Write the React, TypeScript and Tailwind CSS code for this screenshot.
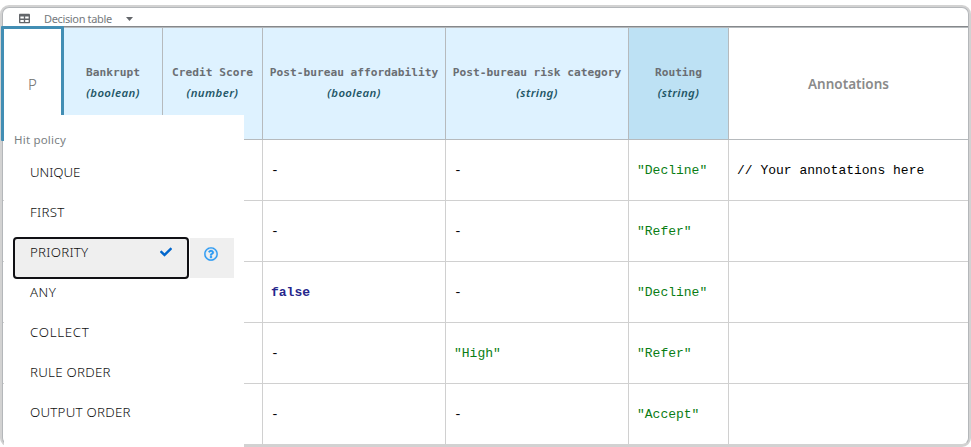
import React from "react";

type Column = { name: string; type: string; width: string; bg: string };

const columns: Column[] = [
  { name: "Bankrupt", type: "(boolean)", width: "w-[99px]", bg: "bg-[#def2ff]" },
  { name: "Credit Score", type: "(number)", width: "w-[100px]", bg: "bg-[#def2ff]" },
  { name: "Post-bureau affordability", type: "(boolean)", width: "w-[183px]", bg: "bg-[#def2ff]" },
  { name: "Post-bureau risk category", type: "(string)", width: "w-[183px]", bg: "bg-[#def2ff]" },
  { name: "Routing", type: "(string)", width: "w-[100px]", bg: "bg-[#bde1f4]" },
];

const rows: string[][] = [
  ["", "", "-", "-", '"Decline"', "// Your annotations here"],
  ["", "", "-", "-", '"Refer"', ""],
  ["", "", "false", "-", '"Decline"', ""],
  ["", "", "-", '"High"', '"Refer"', ""],
  ["", "", "-", "-", '"Accept"', ""],
];

const policies = [
  { label: "UNIQUE", tracking: "tracking-[-0.05px]" },
  { label: "FIRST", tracking: "tracking-[0.3px]" },
  { label: "PRIORITY", tracking: "tracking-[0.25px]" },
  { label: "ANY", tracking: "tracking-[0.5px]" },
  { label: "COLLECT", tracking: "tracking-[0.7px]" },
  { label: "RULE ORDER", tracking: "tracking-[0.25px]" },
  { label: "OUTPUT ORDER", tracking: "tracking-[0.25px]" },
];

function valueStyle(value: string) {
  if (value === "false") return "font-bold text-[#26268c]";
  if (value.startsWith('"')) return "text-[#0a7d14]";
  return "text-black";
}

function Cell({ value, width }: { value: string; width: string }) {
  return (
    <div className={`flex shrink-0 items-center border-r border-[#d0d0d0] pl-2 pt-0.5 font-['Liberation_Mono',monospace] text-[13px] leading-5 ${width}`}>
      <span className={`whitespace-pre ${valueStyle(value)}`}>{value}</span>
    </div>
  );
}

function HitPolicyMenu() {
  return (
    <div className="absolute left-1 top-[115px] h-[332px] w-[240px] bg-white px-[10px] pt-[15px] font-['Noto_Sans',sans-serif]">
      <div className="mb-2 text-[11.5px] leading-5 tracking-[0.2px] text-[#7b7f83]">Hit policy</div>
      {policies.map(({ label, tracking }) => {
        const selected = label === "PRIORITY";
        return (
          <div key={label} className="flex h-10">
            <div
              className={`flex w-[174px] items-start justify-between pl-4 pr-4 pt-1 ${
                selected ? "rounded-[3px] bg-[#efefef] outline-2 outline-offset-[-1px] outline-[#101014]" : ""
              }`}
            >
              <span className={`whitespace-nowrap text-[13.3px] font-[350] leading-5 text-[#101010] ${tracking}`}>{label}</span>
              {selected && (
                <svg className="mt-1 h-3 w-3" viewBox="0 0 512 512" fill="#0066cc">
                  <path d="M173.898 439.404l-166.4-166.4c-9.997-9.997-9.997-26.206 0-36.204l36.203-36.204c9.997-9.998 26.207-9.998 36.204 0L192 312.69 432.095 72.596c9.997-9.997 26.207-9.997 36.204 0l36.203 36.204c9.997 9.997 9.997 26.206 0 36.204l-294.4 294.401c-9.998 9.997-26.207 9.997-36.204-.001z" />
                </svg>
              )}
            </div>
            {selected && (
              <div className="ml-0.5 flex w-11 justify-center bg-[#efefef] pr-0.5 pt-[9px]">
                <svg className="h-[14px] w-[14px]" viewBox="0 0 512 512" fill="#2b9af3" stroke="#2b9af3" strokeWidth="10">
                  <path d="M256 8C119.043 8 8 119.083 8 256c0 136.997 111.043 248 248 248s248-111.003 248-248C504 119.083 392.957 8 256 8zm0 448c-110.532 0-200-89.431-200-200 0-110.495 89.472-200 200-200 110.491 0 200 89.471 200 200 0 110.53-89.431 200-200 200zm107.244-255.2c0 67.052-72.421 68.084-72.421 92.863V300c0 6.627-5.373 12-12 12h-45.647c-6.627 0-12-5.373-12-12v-8.659c0-35.745 27.1-50.034 47.579-61.516 17.561-9.845 28.324-16.541 28.324-29.579 0-17.246-21.999-28.693-39.784-28.693-23.189 0-33.894 10.977-48.942 29.969-4.057 5.12-11.46 6.071-16.666 2.124l-27.824-21.098c-5.107-3.872-6.251-11.066-2.644-16.363C184.846 131.491 214.94 112 261.794 112c49.071 0 101.45 38.304 101.45 88.8zM298 368c0 23.159-18.841 42-42 42s-42-18.841-42-42 18.841-42 42-42 42 18.841 42 42z" />
                </svg>
              </div>
            )}
          </div>
        );
      })}
    </div>
  );
}

export default function App() {
  return (
    <div className="relative h-[447px] w-[971px] overflow-hidden bg-white pt-[5px]">
      <div className="h-[442px] rounded-[9px] border-2 border-[#d2d2d2] bg-[#d2d2d2]">
        <div className="flex h-full flex-col overflow-hidden rounded-[7px] border border-[#b4b7ba] border-b-[#d2d2d2] bg-white">
          <div className="flex h-[19px] shrink-0 items-center border-b border-[#85888b] pl-4 pt-[3px] font-['Noto_Sans',sans-serif]">
            <svg className="h-[11px] w-[11px]" viewBox="0 0 512 512" fill="#63666a">
              <path d="M464 32H48C21.49 32 0 53.49 0 80v352c0 26.51 21.49 48 48 48h416c26.51 0 48-21.49 48-48V80c0-26.51-21.49-48-48-48zM224 416H64v-96h160v96zm0-160H64v-96h160v96zm224 160H288v-96h160v96zm0-160H288v-96h160v96z" />
            </svg>
            <span className="ml-[14px] w-[68px] whitespace-nowrap text-[11px] leading-4 tracking-[-0.35px] text-[#75797d]">Decision table</span>
            <svg className="ml-[14px] h-1 w-[7px]" viewBox="0 0 7 4" fill="#63666a">
              <path d="M0 0h7L3.5 4z" />
            </svg>
          </div>
          <div className="flex h-[113px] shrink-0 border-b border-t border-[#b6babd]">
            <div className="flex w-[61px] shrink-0 items-center justify-center pr-0.5 pt-0.5 font-['Noto_Sans',sans-serif] text-[15px] font-light text-[#707070]">P</div>
            {columns.map((column) => (
              <div key={column.name} className={`flex shrink-0 flex-col items-center justify-center border-r border-[#b6babd] pb-[3px] ${column.width} ${column.bg}`}>
                <div className="whitespace-nowrap font-['DejaVu_Sans_Mono',monospace] text-[11.2px] font-bold leading-[21px] text-[#6a6e73]">{column.name}</div>
                <div className="font-['Noto_Sans',sans-serif] text-[11.4px] font-semibold italic leading-5 tracking-[0.4px] text-[#1f5666]">{column.type}</div>
              </div>
            ))}
            <div className="flex flex-1 items-center justify-center pt-px font-['Noto_Sans',sans-serif] text-[13.5px] font-semibold text-[#8a8a8a]">Annotations</div>
          </div>
          {rows.map((row, index) => (
            <div key={index} className="flex h-[61px] shrink-0 border-b border-[#d0d0d0]">
              <div className="w-[61px] shrink-0" />
              {columns.map((column, i) => (
                <Cell key={column.name} value={row[i]} width={column.width} />
              ))}
              <div className="flex flex-1 items-center whitespace-pre pl-2 pt-0.5 font-['Liberation_Mono',monospace] text-[13px] leading-5 text-black">{row[5]}</div>
            </div>
          ))}
        </div>
      </div>
      <div className="pointer-events-none absolute left-px top-[26px] h-[115px] w-[63px] rounded-[1px] border-[3px] border-[#428eb4]" />
      <HitPolicyMenu />
    </div>
  );
}
